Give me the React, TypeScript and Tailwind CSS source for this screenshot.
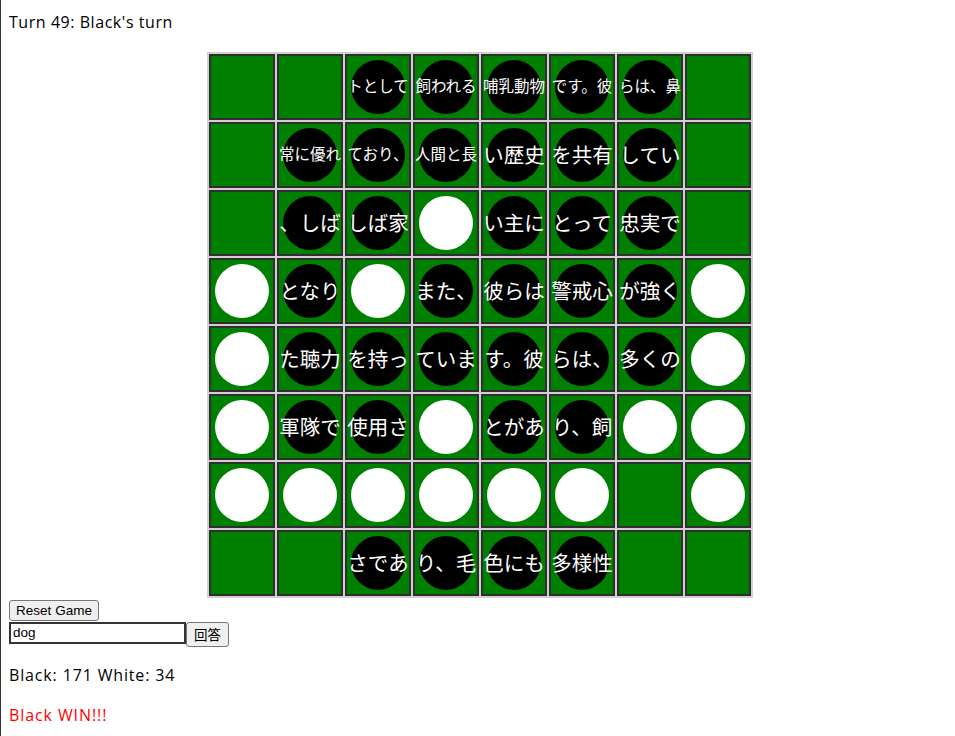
import { useState } from "react";

type Piece = "E" | "B" | "W";

type Cell = { piece: Piece; text?: string };

const e: Cell = { piece: "E" };
const w: Cell = { piece: "W" };
const b = (text: string): Cell => ({ piece: "B", text });

const BOARD: Cell[][] = [
  [e, e, b("トとして"), b("飼われる"), b("哺乳動物"), b("です。彼"), b("らは、鼻"), e],
  [e, b("常に優れ"), b("ており、"), b("人間と長"), b("い歴史"), b("を共有"), b("してい"), e],
  [e, b("、しば"), b("しば家"), w, b("い主に"), b("とって"), b("忠実で"), e],
  [w, b("となり"), w, b("また、"), b("彼らは"), b("警戒心"), b("が強く"), w],
  [w, b("た聴力"), b("を持っ"), b("ていま"), b("す。彼"), b("らは、"), b("多くの"), w],
  [w, b("軍隊で"), b("使用さ"), w, b("とがあ"), b("り、飼"), w, w],
  [w, w, w, w, w, w, e, w],
  [e, e, b("さであ"), b("り、毛"), b("色にも"), b("多様性"), e, e],
];

function Square({ cell }: { cell: Cell }) {
  return (
    <div className="relative flex h-[66px] w-[66px] items-center justify-center border-2 border-[#2f2f2f] bg-[#008000]">
      {cell.piece === "B" && <div className="h-[54px] w-[54px] rounded-full bg-black" />}
      {cell.piece === "W" && <div className="h-[54px] w-[54px] rounded-full bg-white" />}
      {cell.text && (
        <span
          className={
            "absolute inset-0 flex items-center justify-center whitespace-nowrap leading-none text-white " +
            (cell.text.length >= 4 ? "text-[15.5px]" : "text-[20.5px]")
          }
        >
          {cell.text}
        </span>
      )}
    </div>
  );
}

export default function App() {
  const [answer, setAnswer] = useState("dog");

  return (
    <div
      className="min-h-[736px] border-l border-[#333] pl-2 pr-1 text-base leading-6 text-black"
      style={{ fontFamily: '"Open Sans", "Noto Sans CJK JP", sans-serif' }}
    >
      <div className="pt-[10px] tracking-[0.55px]">Turn 49: Black's turn</div>

      <div className="mt-[18px] flex justify-center">
        <div className="grid grid-cols-8 gap-[2px] bg-[#d0d0d0] p-[2px]">
          {BOARD.flatMap((row, r) =>
            row.map((cell, c) => <Square key={`${r}-${c}`} cell={cell} />)
          )}
        </div>
      </div>

      <div className="mt-[2px] flex flex-col gap-[1px]">
        <button
          type="button"
          className="h-[21px] w-[90px] rounded-[3px] border border-[#767676] bg-[#efefef] text-[13.5px] leading-none"
          style={{ fontFamily: '"Liberation Sans", Arial, sans-serif' }}
        >
          Reset Game
        </button>
        <div className="flex items-start">
          <input
            type="text"
            value={answer}
            onChange={(ev) => setAnswer(ev.target.value)}
            className="h-[22px] w-[177px] border-2 border-[#333] bg-white px-[2px] text-[13.5px] outline-none"
            style={{ fontFamily: '"Liberation Sans", Arial, sans-serif' }}
          />
          <button
            type="button"
            className="h-[25px] w-[43px] rounded-[3px] border border-[#767676] bg-[#efefef] text-[13.5px] leading-none"
            style={{ fontFamily: '"Noto Sans CJK JP", sans-serif' }}
          >
            回答
          </button>
        </div>
      </div>

      <p className="mt-4 tracking-[0.85px]">Black: 171 White: 34</p>
      <p className="mt-4 tracking-[0.9px] text-[red]">Black WIN!!!</p>
    </div>
  );
}
